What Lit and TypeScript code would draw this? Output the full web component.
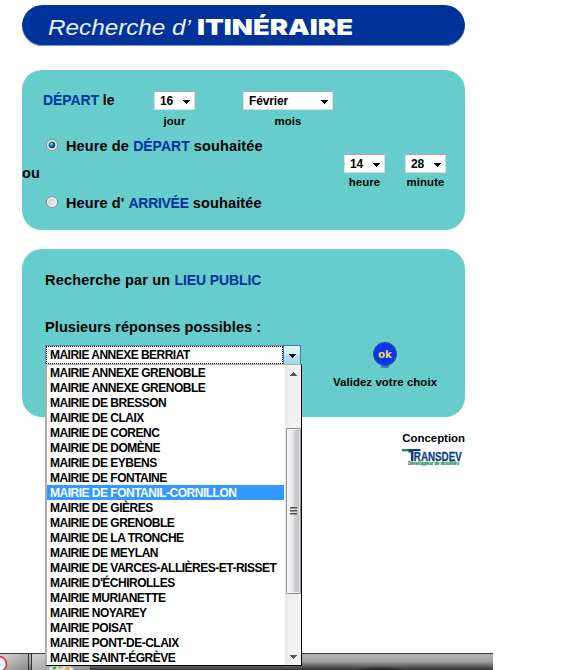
import { LitElement, html, css, svg } from "lit";
import { customElement, property } from "lit/decorators.js";
import { classMap } from "lit/directives/class-map.js";

const PLACES = [
  "MAIRIE ANNEXE GRENOBLE",
  "MAIRIE ANNEXE GRENOBLE",
  "MAIRIE DE BRESSON",
  "MAIRIE DE CLAIX",
  "MAIRIE DE CORENC",
  "MAIRIE DE DOMÈNE",
  "MAIRIE DE EYBENS",
  "MAIRIE DE FONTAINE",
  "MAIRIE DE FONTANIL-CORNILLON",
  "MAIRIE DE GIÈRES",
  "MAIRIE DE GRENOBLE",
  "MAIRIE DE LA TRONCHE",
  "MAIRIE DE MEYLAN",
  "MAIRIE DE VARCES-ALLIÈRES-ET-RISSET",
  "MAIRIE D'ÉCHIROLLES",
  "MAIRIE MURIANETTE",
  "MAIRIE NOYAREY",
  "MAIRIE POISAT",
  "MAIRIE PONT-DE-CLAIX",
  "MAIRIE SAINT-ÉGRÈVE",
];
const HIGHLIGHTED = 8;

const arrowDown = svg`<path d="M0 0h7v1h-1v1h-1v1h-1v1h-1v-1h-1v-1h-1v-1h-1z" />`;

@customElement("select-field")
class SelectField extends LitElement {
  @property() value = "";
  @property() caption = "";

  static styles = css`
    :host {
      display: flex;
      flex-direction: column;
      align-items: center;
    }
    .box {
      box-sizing: border-box;
      width: 100%;
      height: 19px;
      display: flex;
      align-items: center;
      justify-content: space-between;
      padding: 1px 5px 0;
      border: 1px solid #d5dfe0;
      border-top-color: #a9a9b4;
      border-radius: 1px;
      background: #fff;
      font-size: 12px;
      line-height: 17px;
      letter-spacing: -0.15px;
    }
    svg {
      margin-top: 1px;
      margin-right: -1px;
    }
    .caption {
      font-size: 11.4px;
      line-height: 14px;
      margin-top: var(--caption-gap, 4px);
      white-space: nowrap;
      letter-spacing: 0.1px;
    }
  `;

  render() {
    return html`
      <div class="box">
        <span>${this.value}</span>
        <svg width="7" height="4">${arrowDown}</svg>
      </div>
      <div class="caption">${this.caption}</div>
    `;
  }
}

@customElement("radio-mark")
class RadioMark extends LitElement {
  @property({ type: Boolean }) checked = false;

  static styles = css`
    :host {
      display: block;
      width: 12px;
      height: 12px;
      margin-top: -2px;
    }
    svg {
      display: block;
    }
  `;

  render() {
    return html`
      <svg width="12" height="12" viewBox="0 0 12 12">
        <defs>
          <radialGradient id="dot" cx=".38" cy=".35" r=".7">
            <stop offset="0" stop-color="#8ee4fb" />
            <stop offset=".4" stop-color="#1c80b4" />
            <stop offset="1" stop-color="#082c50" />
          </radialGradient>
          <linearGradient id="well" x1="0" y1="0" x2="1" y2="1">
            <stop offset="0" stop-color="#c0c5ca" />
            <stop offset="1" stop-color="#f7f7f7" />
          </linearGradient>
        </defs>
        <circle cx="6" cy="6" r="5.5" fill="#f4f4f4" stroke="#8b8f8f" />
        <circle cx="6" cy="6" r="3.8" fill="url(#well)" />
        ${this.checked ? svg`<circle cx="6" cy="6" r="3.1" fill="url(#dot)" stroke="#173e60" stroke-width=".6" />` : null}
      </svg>
    `;
  }
}

@customElement("place-menu")
class PlaceMenu extends LitElement {
  static styles = css`
    :host {
      box-sizing: border-box;
      display: flex;
      width: 257px;
      height: 302px;
      background: #fff;
      border: 1px solid #000;
      border-left: 2px solid #acacac;
      border-top-color: #acacac;
      font-size: 12px;
      letter-spacing: -0.5px;
    }
    .items {
      width: 237px;
    }
    .item {
      box-sizing: border-box;
      height: 15px;
      line-height: 14px;
      padding: 1px 0 0 3px;
      white-space: nowrap;
    }
    .item.on {
      background: #3399ff;
      color: #fff;
    }
    .bar {
      display: flex;
      flex-direction: column;
      align-items: center;
      width: 16px;
      margin-left: 1px;
      background: linear-gradient(90deg, #e3e3e3, #efefef 20%, #f2f2f2);
    }
    .cap {
      height: 63px;
      padding-top: 7px;
      box-sizing: border-box;
    }
    .thumb {
      box-sizing: border-box;
      width: 15px;
      height: 166px;
      border: 1px solid #8f8f8f;
      border-radius: 1px;
      background: linear-gradient(90deg, #f5f5f5, #e9e9eb 48%, #d2d2d6 52%, #bebec4);
      box-shadow: inset 0 0 0 1px #ffffffa0;
      display: flex;
      align-items: center;
      justify-content: center;
    }
    .foot {
      padding-top: 61px;
    }
    svg {
      display: block;
    }
  `;

  render() {
    return html`
      <div class="items">
        ${PLACES.map(
          (p, i) => html`<div class=${classMap({ item: true, on: i === HIGHLIGHTED })}>${p}</div>`
        )}
      </div>
      <div class="bar">
        <div class="cap"><svg width="7" height="4" fill="#555"><path d="M3 0h1v1h1v1h1v1h1v1h-7v-1h1v-1h1v-1h1z" /></svg></div>
        <div class="thumb">
          <svg width="7" height="8" fill="#555"><path d="M0 0h7v1h-7zM0 3h7v1h-7zM0 6h7v1h-7z" /><path d="M0 1h7v1h-7zM0 4h7v1h-7zM0 7h7v1h-7z" fill="#999" /></svg>
        </div>
        <div class="foot"><svg width="7" height="4" fill="#555">${arrowDown}</svg></div>
      </div>
    `;
  }
}

@customElement("app-root")
class AppRoot extends LitElement {
  static styles = css`
    :host {
      position: relative;
      display: flex;
      flex-direction: column;
      box-sizing: border-box;
      width: 568px;
      height: 670px;
      overflow: hidden;
      background: #fff;
      color: #000;
      font-family: "Liberation Sans", Arial, sans-serif;
      font-weight: bold;
      font-size: 14px;
    }
    .page {
      width: 443px;
      margin-left: 22px;
      padding-top: 5px;
      flex: none;
    }
    .blue {
      color: #003399;
      font-size: 14px;
      letter-spacing: -0.1px;
    }
    .title {
      box-sizing: border-box;
      height: 41px;
      border-radius: 21px;
      background: #003399;
      box-shadow: inset 0 -1px 0 #7f99cc;
    }
    .title svg {
      display: block;
    }
    .light {
      font-size: 22.5px;
      font-weight: normal;
      font-style: italic;
      fill: #e9eef8;
    }
    .heavy {
      font-family: Inter, "Liberation Sans", sans-serif;
      font-weight: 900;
      font-size: 22px;
      fill: #fff;
    }
    .panel {
      position: relative;
      box-sizing: border-box;
      border-radius: 20px;
      background: #66cccc;
    }
    .when {
      height: 160px;
      margin-top: 24px;
      padding-top: 21px;
    }
    .date {
      display: flex;
      padding-left: 21px;
      height: 45px;
    }
    .date .lead {
      width: 111px;
      line-height: 19px;
    }
    .short {
      width: 41px;
    }
    .month {
      width: 90px;
      margin-left: 48px;
    }
    .time {
      display: flex;
    }
    .modes {
      width: 322px;
      font-size: 14.5px;
      letter-spacing: 0.12px;
    }
    .mode {
      display: flex;
      align-items: center;
      gap: 8px;
      height: 20px;
      padding-left: 24px;
    }
    .mode .blue {
      letter-spacing: 0;
    }
    .mode .tight {
      letter-spacing: -0.3px;
    }
    .or {
      line-height: 20px;
      padding: 7px 0 10px;
    }
    .clock {
      display: flex;
      gap: 20px;
      padding-top: 18px;
      --caption-gap: 2px;
    }
    .place {
      height: 168px;
      margin-top: 19px;
      padding: 21px 0 0 23px;
    }
    .heading {
      line-height: 20px;
      font-size: 14.5px;
      letter-spacing: 0.18px;
    }
    .ask {
      margin-top: 27px;
      letter-spacing: 0.09px;
    }
    .pick {
      display: flex;
      margin-top: 7px;
    }
    .combo {
      box-sizing: border-box;
      position: relative;
      width: 256px;
      height: 20px;
      margin-top: 1px;
      display: flex;
      border: 1px solid #4f93c4;
      background: #fff;
      font-size: 12px;
    }
    .current {
      box-sizing: border-box;
      width: 237px;
      height: 18px;
      border: 1px dotted #000;
      line-height: 17px;
      padding-left: 3px;
      white-space: nowrap;
      letter-spacing: -0.52px;
    }
    .drop {
      box-sizing: border-box;
      width: 18px;
      height: 20px;
      margin: -1px -1px 0 0;
      border: 1px solid #3c7fb1;
      background: linear-gradient(#e6f5fd, #d0ecfb 48%, #b5e0f8 52%, #a2d4f1);
      display: flex;
      align-items: center;
      justify-content: center;
      padding-top: 2px;
    }
    place-menu {
      position: absolute;
      left: -1px;
      top: 18px;
      z-index: 2;
    }
    .send {
      width: 104px;
      margin: -3px 0 0 32px;
      display: flex;
      flex-direction: column;
      align-items: center;
      font-size: 11.4px;
      line-height: 12px;
      white-space: nowrap;
      letter-spacing: 0.08px;
    }
    .send svg {
      display: block;
      margin-bottom: 7px;
    }
    .credit {
      display: flex;
      flex-direction: column;
      align-items: flex-end;
      font-size: 11.4px;
      line-height: 14px;
      margin-top: 14px;
      letter-spacing: 0;
    }
    .credit svg {
      display: block;
      margin: 3px 2px 0 0;
      overflow: visible;
    }
    .taskbar {
      position: absolute;
      left: 0;
      bottom: 0;
      width: 493px;
      height: 17px;
    }
    .taskbar svg {
      display: block;
    }
  `;

  render() {
    return html`
      <div class="page">
        <div class="title">
          <svg width="443" height="41" viewBox="0 0 443 41">
            <text class="light" x="26" y="30" textLength="143" lengthAdjust="spacingAndGlyphs">Recherche d’</text>
            <text class="heavy" x="175" y="30" textLength="156" lengthAdjust="spacingAndGlyphs">ITINÉRAIRE</text>
          </svg>
        </div>

        <div class="panel when">
          <div class="date">
            <div class="lead"><span class="blue">DÉPART</span> le</div>
            <select-field class="short" value="16" caption="jour"></select-field>
            <select-field class="month" value="Février" caption="mois"></select-field>
          </div>
          <div class="time">
            <div class="modes">
              <div class="mode"><radio-mark checked></radio-mark><span>Heure de <span class="blue">DÉPART</span> souhaitée</span></div>
              <div class="or">ou</div>
              <div class="mode"><radio-mark></radio-mark><span>Heure d' <span class="blue tight">ARRIVÉE</span> souhaitée</span></div>
            </div>
            <div class="clock">
              <select-field class="short" value="14" caption="heure"></select-field>
              <select-field class="short" value="28" caption="minute"></select-field>
            </div>
          </div>
        </div>

        <div class="panel place">
          <div class="heading">Recherche par un <span class="blue">LIEU PUBLIC</span></div>
          <div class="heading ask">Plusieurs réponses possibles :</div>
          <div class="pick">
            <div class="combo">
              <div class="current">MAIRIE ANNEXE BERRIAT</div>
              <div class="drop"><svg width="7" height="4">${arrowDown}</svg></div>
              <place-menu></place-menu>
            </div>
            <div class="send">
              <svg width="26" height="28" viewBox="0 0 26 28">
                <ellipse cx="13" cy="25.500" rx="4.500" ry="1.500" fill="#3a75d6" />
                <circle cx="13" cy="13" r="11.300" fill="#0a35e8" stroke="#2452a8" stroke-width="1.200" />
                <text x="6" y="16.500" textLength="14" lengthAdjust="spacingAndGlyphs" font-size="11" letter-spacing="0" font-family="DejaVu Sans, sans-serif" font-weight="700" fill="#f3d36b">ok</text>
              </svg>
              <span>Validez votre choix</span>
            </div>
          </div>
        </div>

        <div class="credit">
          <span>Conception</span>
          <svg width="61" height="19" viewBox="0 0 61 19">
            <path d="M0 1h8v2.400h-8z" fill="#159447" />
            <path d="M6.500 1h12v2h-7v10h-2.600v-8.500h-2.400z" fill="#0b3f87" />
            <text x="11.800" y="13" font-size="12.500" textLength="48" lengthAdjust="spacingAndGlyphs" letter-spacing="0" fill="#0b3f87" stroke="#0b3f87" stroke-width=".3">RANSDEV</text>
            <text x="6" y="17.200" font-size="4.600" textLength="51" lengthAdjust="spacingAndGlyphs" letter-spacing="0" fill="#0c8a3c" stroke="#0c8a3c" stroke-width=".2">Développeur de mobilités</text>
          </svg>
        </div>
      </div>

      <div class="taskbar">
        <svg width="493" height="17" viewBox="0 0 493 17">
          <defs>
            <linearGradient id="steel" x1="0" y1="0" x2="0" y2="1">
              <stop offset="0" stop-color="#b4b4b4" />
              <stop offset=".5" stop-color="#a2a2a2" />
              <stop offset=".75" stop-color="#666" />
              <stop offset="1" stop-color="#333" />
            </linearGradient>
            <linearGradient id="tab" x1="0" y1="0" x2="1" y2="1">
              <stop offset="0" stop-color="#d4d4d4" />
              <stop offset="1" stop-color="#8c8c8c" />
            </linearGradient>
            <radialGradient id="shade">
              <stop offset="0" stop-color="#111" stop-opacity=".8" />
              <stop offset="1" stop-color="#111" stop-opacity="0" />
            </radialGradient>
          </defs>
          <rect width="493" height="17" fill="url(#steel)" />
          <ellipse cx="380" cy="18" rx="28" ry="5" fill="url(#shade)" />
          <rect y="1" width="28" height="16" fill="url(#tab)" />
          <rect x="32" y="1" width="58" height="16" fill="url(#tab)" />
          <path d="M28.500 0v17M31.500 0v17M90.500 0v17" stroke="#333" />
          <path d="M30 0v17" stroke="#aaa" />
          <rect width="493" height="1" fill="#3c3c3c" />
          <circle cx="-1" cy="11" r="7.500" fill="#eef0fa" stroke="#cf2b36" stroke-width="1.500" />
          <ellipse cx="61" cy="18" rx="13" ry="6.500" fill="#d5e9f5" />
          <path d="M52 15l3-2 2 2-3 2z" fill="#54a63c" />
          <path d="M58 13l4-1 1 3-4 1zM66 13l4 1-1 3-4-1z" fill="#f0ac2a" />
        </svg>
      </div>
    `;
  }
}
